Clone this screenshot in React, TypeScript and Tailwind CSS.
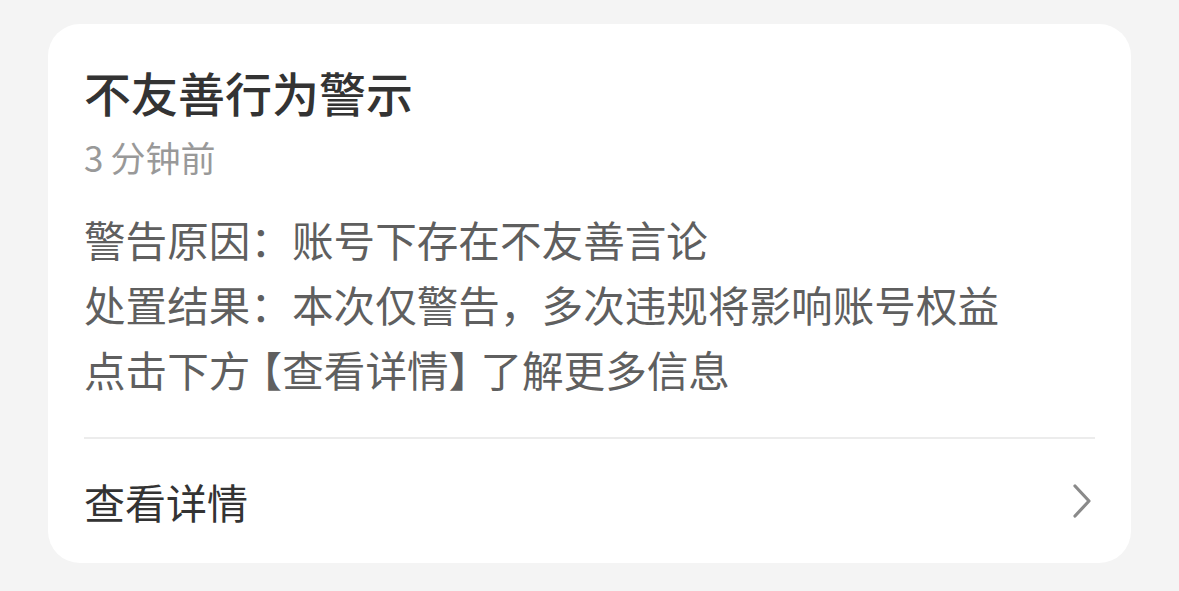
import React from "react";

export default function App() {
  return (
    <div
      className="w-[1179px] h-[591px] bg-[#f4f4f4] pt-[24px] pl-[48px] pr-[48px]"
      style={{ fontFamily: '"Noto Sans CJK SC", "Noto Sans", sans-serif' }}
    >
      <div className="bg-white rounded-[32px] h-[539px] px-[36px] pt-[38px] flex flex-col">
        {/* Header */}
        <h1 className="text-[47px] leading-[60px] text-[#333333] font-medium">
          不友善行为警示
        </h1>
        <p className="text-[35px] leading-[50px] text-[#999999] mt-[10px]">
          <span className="mr-[7px]">3</span>分钟前
        </p>

        {/* Body */}
        <div className="mt-[25px] text-[41.6px] leading-[65px] text-[#5f5f5f]">
          <p>警告原因：账号下存在不友善言论</p>
          <p>处置结果：本次仅警告，多次违规将影响账号权益</p>
          <p>
            点击下方
            <span className="ml-[11px] [font-feature-settings:'halt']">【</span>
            查看详情
            <span className="mr-[11px] [font-feature-settings:'halt']">】</span>
            了解更多信息
          </p>
        </div>

        {/* Footer */}
        <div className="mt-[35px] border-t-2 border-[#ececec] flex-1 flex items-center justify-between">
          <span className="text-[41px] leading-[60px] text-[#333333]">查看详情</span>
          <svg width="22" height="36" viewBox="0 0 22 36" className="mr-[2px]">
            <path
              d="M4 3 L18 18 L4 33"
              fill="none"
              stroke="#8a8a8a"
              strokeWidth="3.2"
              strokeLinecap="round"
              strokeLinejoin="round"
            />
          </svg>
        </div>
      </div>
    </div>
  );
}
